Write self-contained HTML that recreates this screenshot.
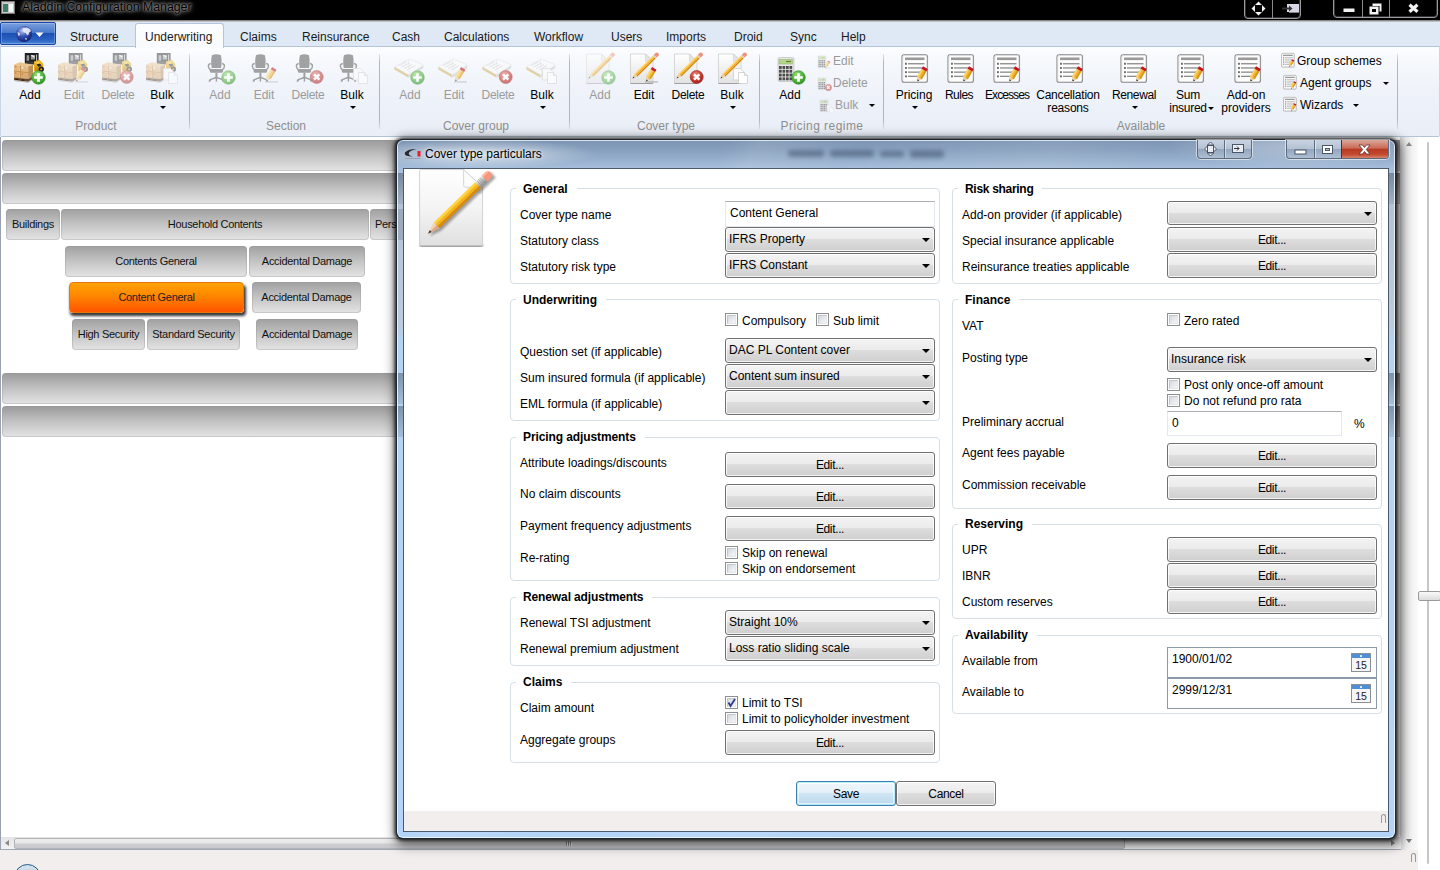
<!DOCTYPE html><html><head><meta charset="utf-8"><title>Aladdin Configuration Manager</title><style>
*{box-sizing:border-box;margin:0;padding:0}
html,body{width:1440px;height:870px;overflow:hidden;background:#fff;font-family:"Liberation Sans",sans-serif;font-size:12px;color:#000}
.abs{position:absolute}
#titlebar{position:absolute;left:0;top:0;width:1440px;height:22px;background:#000}
#titlebar .line{position:absolute;left:0;top:20px;width:1440px;height:2px;background:linear-gradient(#707070,#d8d8d8)}
#title{position:absolute;left:22px;top:0;font-size:12.3px;line-height:15px;color:#000;text-shadow:0 0 3px #8a8a8a,0 0 5px #777,0 0 8px #777,0 0 2px #999;white-space:nowrap}
#tabrow{position:absolute;left:0;top:22px;width:1440px;height:25px;background:#dfe9f5}
.tab{z-index:4;position:absolute;top:0;height:25px;line-height:30px;font-size:12px;white-space:nowrap;color:#1a1a1a}
#ribbon{position:absolute;left:0;top:46px;width:1440px;height:91px;border:1px solid #b4c4d8;border-left-color:#c9d6e7;border-right-color:#c9d6e7;border-radius:0 0 2px 2px;background:linear-gradient(#fcfdff 0,#f5f8fc 18%,#eef2f9 55%,#e9eef7 100%)}
.rl{position:absolute;font-size:12px;line-height:13px;text-align:center;white-space:nowrap;transform:translateX(-50%)}
.dis{color:#9b9b9b}
.gl{position:absolute;top:119px;font-size:12px;line-height:14px;color:#8e8e8e;transform:translateX(-50%);white-space:nowrap}
.sep{position:absolute;top:54px;width:1px;height:75px;background:linear-gradient(rgba(160,178,205,.3),#a6b8d2 12%,#a6b8d2 88%,rgba(160,178,205,.3))}
/*arr*/.arr{position:absolute;width:0;height:0;border-left:3.5px solid transparent;border-right:3.5px solid transparent;border-top:4px solid #000}
.sarr{position:absolute;width:0;height:0;border-left:3px solid transparent;border-right:3px solid transparent;border-top:3px solid #000}
.bar{position:absolute;border-radius:4px;background:linear-gradient(#9a9a9a 0,#c2c2c2 50%,#e4e4e4 100%);box-shadow:inset 0 0 0 1px rgba(150,150,150,.35)}
.nb{position:absolute;border-radius:4px;background:linear-gradient(#a0a0a0 0,#c4c4c4 50%,#e4e4e4 100%);box-shadow:inset 0 0 0 1px rgba(150,150,150,.35);font-size:11px;letter-spacing:-0.3px;text-align:center;white-space:nowrap;color:#111}
.grp{position:absolute;border:1px solid #d5dfe5;border-radius:4px}
.gh{position:absolute;font-weight:bold;font-size:12px;line-height:14px;background:#fff;padding:0 9px 0 7px;white-space:nowrap;letter-spacing:0}
.lb{position:absolute;font-size:12px;line-height:14px;white-space:nowrap}
.cb{position:absolute;width:210px;height:25px;border:1px solid #707070;border-radius:3px;background:linear-gradient(#f3f3f3 0,#ebebeb 49%,#dddddd 50%,#cfcfcf 100%);box-shadow:inset 0 0 0 1px rgba(255,255,255,.75);font-size:12px;line-height:23px;padding-left:3px;white-space:nowrap}
.cb i{position:absolute;right:4px;top:9.5px;width:0;height:0;border-left:4px solid transparent;border-right:4px solid transparent;border-top:4.5px solid #000}
.bt{letter-spacing:-0.35px;position:absolute;width:210px;height:25px;border:1px solid #707070;border-radius:3px;background:linear-gradient(#f3f3f3 0,#ebebeb 49%,#dddddd 50%,#cfcfcf 100%);box-shadow:inset 0 0 0 1px rgba(255,255,255,.75);font-size:12px;line-height:24px;text-align:center;white-space:nowrap}
.tb{position:absolute;border:1px solid #e3e9ef;border-top-color:#abadb3;background:#fff;font-size:12px;line-height:23px;padding-left:4px;white-space:nowrap}
.ck{position:absolute;width:13px;height:13px;border:1px solid #8e8f8f;background:#fff}
.ck:before{content:"";box-sizing:border-box;position:absolute;left:1px;top:1px;width:9px;height:9px;border:1px solid #c2c6cd;border-right-color:#e4e6ea;border-bottom-color:#e4e6ea;background:linear-gradient(135deg,#d4d8df,#f6f7f9)}
</style></head><body>
<div id="titlebar"><div class="line"></div>
<div class="abs" style="left:1px;top:1px;width:14px;height:13px;background:#c9c9c9;border:1px solid #777"><div class="abs" style="left:1px;top:2px;width:5px;height:8px;background:#3f7f6a"></div><div class="abs" style="left:7px;top:2px;width:4px;height:8px;background:#f4f4f4"></div></div>
<div id="title">Aladdin Configuration Manager</div>
<div class="abs" style="left:1244px;top:-3px;width:57px;height:22px;border:1px solid #9a9a9a;border-radius:0 0 4px 4px;box-shadow:inset 0 0 0 1px #333"></div><div class="abs" style="left:1272px;top:0;width:1px;height:18px;background:#8a8a8a"></div>
<div class="abs" style="left:1333px;top:-3px;width:105px;height:21px;border:1px solid #9a9a9a;border-radius:0 0 4px 4px;box-shadow:inset 0 0 0 1px #333"></div><div class="abs" style="left:1362px;top:0;width:1px;height:17px;background:#8a8a8a"></div><div class="abs" style="left:1389px;top:0;width:1px;height:17px;background:#8a8a8a"></div>
<svg class="abs" style="left:1244px;top:0" width="196" height="20" viewBox="0 0 196 20"><g fill="#f2f2f2"><path d="M14.5 1.5l3.5 3.5h-7zM14.5 15.5l3.500-3.500h-7zM7.500 8.500l3.500-3.500v7zM21.500 8.500l-3.500-3.500v7z"/><rect x="43" y="4" width="12" height="8" fill="#d8d8e4"/><rect x="45" y="12" width="10" height="1" fill="#888"/><path d="M38 7.500h7v-2l3.500 3-3.500 3v-2h-7z" fill="#333"/><rect x="99.500" y="8.500" width="11" height="3.500"/><path d="M125.500 6.500h9v8h-9zM128 9v3h4v-3z" fill-rule="evenodd"/><path d="M128.500 3.500h9v8h-2v-5.500h-7z"/></g><path d="M165.500 4.800l8 7M173.500 4.800l-8 7" stroke="#f2f2f2" stroke-width="3.200"/></svg>
</div>
<div id="tabrow">
<div class="abs" style="left:0;top:0;width:56px;height:23px;border:1px solid #1546a8;border-radius:2px;background:linear-gradient(#7a9fdc 0,#4a7acb 45%,#1d50b4 50%,#2a62c2 80%,#4a86d8 100%);box-shadow:inset 0 0 0 1px rgba(255,255,255,.25)"></div>
<svg class="abs" style="left:15px;top:2px" width="36" height="20" viewBox="0 0 36 20"><defs><radialGradient id="gl" cx="40%" cy="30%" r="75%"><stop offset="0" stop-color="#b9c8ee"/><stop offset=".45" stop-color="#3b56b6"/><stop offset="1" stop-color="#0b1a6a"/></radialGradient></defs><circle cx="9" cy="10" r="8" fill="url(#gl)"/><path d="M8 4l4-.5 3 1.500 1 2.500-1.500.5-1 2.500-1.500 1-1-2.500-2-.5-1.500-2zM2.500 8l2 1 .5 2-1.500 1zM10 14l2 .5-1 2z" fill="#e9eefb" opacity=".92"/><path d="M20.500 8.500h8l-4 4.500z" fill="#fff"/></svg>
<div class="abs" style="left:135px;top:1px;width:89px;height:25px;border:1px solid #b5c6dc;border-bottom:none;border-radius:3px 3px 0 0;background:linear-gradient(#fcfdfe,#f8fafd);z-index:3"></div>
<div class="tab" style="left:70px">Structure</div>
<div class="tab" style="left:145px">Underwriting</div>
<div class="tab" style="left:240px">Claims</div>
<div class="tab" style="left:302px">Reinsurance</div>
<div class="tab" style="left:392px">Cash</div>
<div class="tab" style="left:444px">Calculations</div>
<div class="tab" style="left:534px">Workflow</div>
<div class="tab" style="left:611px">Users</div>
<div class="tab" style="left:666px">Imports</div>
<div class="tab" style="left:734px">Droid</div>
<div class="tab" style="left:790px">Sync</div>
<div class="tab" style="left:841px">Help</div>
</div>
<div id="ribbon"></div>
<div id="ribc" class="abs" style="left:0;top:0;width:1440px;height:137px">
<div class="rl" style="left:30px;top:89px;letter-spacing:0px">Add</div>
<div class="rl dis" style="left:74px;top:89px;letter-spacing:0px">Edit</div>
<div class="rl dis" style="left:118px;top:89px;letter-spacing:-0.3px">Delete</div>
<div class="rl" style="left:162px;top:89px;letter-spacing:0px">Bulk</div>
<div class="sarr" style="left:159.5px;top:106px"></div>
<div class="rl dis" style="left:220px;top:89px;letter-spacing:0px">Add</div>
<div class="rl dis" style="left:264px;top:89px;letter-spacing:0px">Edit</div>
<div class="rl dis" style="left:308px;top:89px;letter-spacing:-0.3px">Delete</div>
<div class="rl" style="left:352px;top:89px;letter-spacing:0px">Bulk</div>
<div class="sarr" style="left:349.5px;top:106px"></div>
<div class="rl dis" style="left:410px;top:89px;letter-spacing:0px">Add</div>
<div class="rl dis" style="left:454px;top:89px;letter-spacing:0px">Edit</div>
<div class="rl dis" style="left:498px;top:89px;letter-spacing:-0.3px">Delete</div>
<div class="rl" style="left:542px;top:89px;letter-spacing:0px">Bulk</div>
<div class="sarr" style="left:539.5px;top:106px"></div>
<div class="rl dis" style="left:600px;top:89px;letter-spacing:0px">Add</div>
<div class="rl" style="left:644px;top:89px;letter-spacing:0px">Edit</div>
<div class="rl" style="left:688px;top:89px;letter-spacing:-0.3px">Delete</div>
<div class="rl" style="left:732px;top:89px;letter-spacing:0px">Bulk</div>
<div class="sarr" style="left:729.5px;top:106px"></div>
<div class="rl" style="left:790px;top:89px;letter-spacing:0px">Add</div>
<div class="rl" style="left:914px;top:89px;letter-spacing:0px">Pricing</div>
<div class="sarr" style="left:911.5px;top:106px"></div>
<div class="rl" style="left:959px;top:89px;letter-spacing:-0.5px">Rules</div>
<div class="rl" style="left:1007px;top:89px;letter-spacing:-0.9px">Excesses</div>
<div class="rl" style="left:1068px;top:89px;letter-spacing:-0.2px">Cancellation<br>reasons</div>
<div class="rl" style="left:1134px;top:89px;letter-spacing:-0.4px">Renewal</div>
<div class="sarr" style="left:1131.5px;top:106px"></div>
<div class="rl" style="left:1188px;top:89px;letter-spacing:-0.3px">Sum<br>insured</div>
<div class="sarr" style="left:1208px;top:107px"></div>
<div class="rl" style="left:1246px;top:89px;letter-spacing:0px">Add-on<br>providers</div>
<div class="gl" style="left:96px;letter-spacing:0px">Product</div>
<div class="gl" style="left:286px;letter-spacing:0px">Section</div>
<div class="gl" style="left:476px;letter-spacing:0px">Cover group</div>
<div class="gl" style="left:666px;letter-spacing:0px">Cover type</div>
<div class="gl" style="left:822px;letter-spacing:0.45px">Pricing regime</div>
<div class="gl" style="left:1141px;letter-spacing:0px">Available</div>
<div class="sep" style="left:189px"></div>
<div class="sep" style="left:379px"></div>
<div class="sep" style="left:569px"></div>
<div class="sep" style="left:759px"></div>
<div class="sep" style="left:883px"></div>
<div class="sep" style="left:1397px"></div>
<div class="lb dis" style="left:833px;top:55px;line-height:13px">Edit</div>
<div class="lb dis" style="left:833px;top:77px;line-height:13px">Delete</div>
<div class="lb dis" style="left:835px;top:99px;line-height:13px">Bulk</div>
<div class="lb" style="left:1297px;top:55px;line-height:13px">Group schemes</div>
<div class="lb" style="left:1300px;top:77px;line-height:13px">Agent groups</div>
<div class="lb" style="left:1300px;top:99px;line-height:13px">Wizards</div>
<div class="sarr" style="left:869px;top:104px"></div><div class="sarr" style="left:1383px;top:82px"></div><div class="sarr" style="left:1353px;top:104px"></div>
<svg width="0" height="0" style="position:absolute"><defs><radialGradient id="gp" cx="40%" cy="30%" r="80%"><stop offset="0" stop-color="#9be07a"/><stop offset=".55" stop-color="#4fb03a"/><stop offset="1" stop-color="#2e8a24"/></radialGradient><radialGradient id="rp" cx="40%" cy="30%" r="80%"><stop offset="0" stop-color="#e88a80"/><stop offset=".55" stop-color="#c8372f"/><stop offset="1" stop-color="#9a1f1a"/></radialGradient><linearGradient id="pgr" x1="0" y1="0" x2="0" y2="1"><stop offset="0" stop-color="#ffffff"/><stop offset="1" stop-color="#e2e2e2"/></linearGradient><linearGradient id="box1" x1="0" y1="0" x2="0" y2="1"><stop offset="0" stop-color="#e8c08a"/><stop offset="1" stop-color="#d6a66a"/></linearGradient></defs></svg>
<svg class="abs" style="left:14px;top:52px" width="32" height="33" viewBox="0 0 32 33"><g><path d="M10.800 1h13.800v11h-13.800z" fill="#1e1e1e"/><path d="M12.600 3.200h2.600v5.500h-2.600zM16.800 3h4.200v4.500h-4.200z" fill="#9a9a9a"/><path d="M17.500 3.200l2.800 1.800" stroke="#f4f4f4" stroke-width="1.100"/><path d="M22.600 2.500v9" stroke="#d9d9d9" stroke-width=".9"/><path d="M12 9.500h9v3h-9z" fill="#3a3a3a"/><path d="M20 9.500l5.500-1.700 3.700 4v7.500h-9.200z" fill="#e6ad18"/><path d="M21 10.500l4-1.200 2.500 2.800-2 1.200z" fill="#f7cf4a"/><path d="M22.500 12.500l3.500-1 1.500 2-3 1.500z" fill="#2a2a2a"/><circle cx="27.200" cy="17.300" r="2.700" fill="#1d1d1d"/><circle cx="27.200" cy="17.300" r="1.100" fill="#d9a21a"/><path d="M21 14.500l3 .5v4h-3z" fill="#c88f12"/><path d="M0 12.500l6-2.200 13 2.400-4.800 1.800z" fill="#eac48c"/><path d="M0 12.500l14.200 2v12.500l-14.200-1.500z" fill="url(#box1)"/><path d="M14.200 14.500l4.800-1.800v11.800l-4.800 2.500z" fill="#bf9058"/><path d="M0 19l14.200 1.800 4.800-2.200M6.500 13.400v12.800" stroke="#b98548" stroke-width=".7" fill="none"/><path d="M.8 14l1.600.25v1.300l-1.600-.25zM.8 20.300l1.600.25v1.300l-1.600-.25zM7.500 21.200l1.600.25v1.300l-1.600-.25z" fill="#e8702a"/><path d="M7.500 15l1.800.25v1.500l-1.800-.25zM5 17.500l1 .15v.8l-1-.15zM5 23.500l1 .15v.8l-1-.15z" fill="#f6efe6"/><path d="M0 25.500l14.200 1.500 4.800-2.500v2.300l-4.800 2.900-14.200-1.700z" fill="#6a4a2c"/><path d="M1.500 26.600l3 .35v1.200l-3-.35zM7.500 27.300l3 .35v1.200l-3-.35z" fill="#2e1f12"/><path d="M0 28.200l14.200 1.700 4.800-2.900v.8l-4.800 2.900-14.200-1.700z" fill="#8a8a8a" opacity=".7"/></g><circle cx="24.500" cy="25.500" r="6.800" fill="url(#gp)" stroke="#2f8a25" stroke-width=".6"/><path d="M24.500 21.200v8.600M20.200 25.500h8.600" stroke="#fff" stroke-width="2.700"/></svg>
<svg class="abs" style="left:58px;top:52px;opacity:0.45" width="32" height="33" viewBox="0 0 32 33"><g><path d="M10.800 1h13.800v11h-13.800z" fill="#1e1e1e"/><path d="M12.600 3.200h2.600v5.500h-2.600zM16.800 3h4.200v4.500h-4.200z" fill="#9a9a9a"/><path d="M17.500 3.200l2.800 1.800" stroke="#f4f4f4" stroke-width="1.100"/><path d="M22.600 2.500v9" stroke="#d9d9d9" stroke-width=".9"/><path d="M12 9.500h9v3h-9z" fill="#3a3a3a"/><path d="M20 9.500l5.500-1.700 3.700 4v7.500h-9.200z" fill="#e6ad18"/><path d="M21 10.500l4-1.200 2.500 2.800-2 1.200z" fill="#f7cf4a"/><path d="M22.500 12.500l3.500-1 1.500 2-3 1.500z" fill="#2a2a2a"/><circle cx="27.200" cy="17.300" r="2.700" fill="#1d1d1d"/><circle cx="27.200" cy="17.300" r="1.100" fill="#d9a21a"/><path d="M21 14.500l3 .5v4h-3z" fill="#c88f12"/><path d="M0 12.500l6-2.200 13 2.400-4.800 1.800z" fill="#eac48c"/><path d="M0 12.500l14.200 2v12.500l-14.200-1.500z" fill="url(#box1)"/><path d="M14.200 14.500l4.800-1.800v11.800l-4.800 2.500z" fill="#bf9058"/><path d="M0 19l14.200 1.800 4.800-2.200M6.500 13.400v12.800" stroke="#b98548" stroke-width=".7" fill="none"/><path d="M.8 14l1.600.25v1.300l-1.600-.25zM.8 20.300l1.600.25v1.300l-1.600-.25zM7.500 21.200l1.600.25v1.300l-1.600-.25z" fill="#e8702a"/><path d="M7.500 15l1.800.25v1.500l-1.800-.25zM5 17.500l1 .15v.8l-1-.15zM5 23.500l1 .15v.8l-1-.15z" fill="#f6efe6"/><path d="M0 25.500l14.200 1.500 4.800-2.500v2.300l-4.800 2.900-14.200-1.700z" fill="#6a4a2c"/><path d="M1.500 26.600l3 .35v1.200l-3-.35zM7.500 27.300l3 .35v1.200l-3-.35z" fill="#2e1f12"/><path d="M0 28.200l14.200 1.700 4.800-2.900v.8l-4.800 2.900-14.200-1.700z" fill="#8a8a8a" opacity=".7"/></g><rect x="17" y="29.300" width="13" height="1.200" fill="#9a9a9a" opacity=".7"/><g transform="translate(18.300,29.300) rotate(-58)"><path d="M0 0l4-2.600v5.200z" fill="#e9cfa3"/><path d="M0 0l1.600-1v2z" fill="#222"/><rect x="4" y="-2.600" width="8.500" height="5.200" fill="#f3bd3c"/><rect x="4" y="-2.600" width="8.500" height="1.700" fill="#fbd877"/><rect x="4" y=".9" width="8.500" height="1.700" fill="#dc9d1e"/><rect x="12.500" y="-2.600" width="2.600" height="5.200" fill="#c6202a"/></g></svg>
<svg class="abs" style="left:102px;top:52px;opacity:0.45" width="32" height="33" viewBox="0 0 32 33"><g><path d="M10.800 1h13.800v11h-13.800z" fill="#1e1e1e"/><path d="M12.600 3.200h2.600v5.500h-2.600zM16.800 3h4.200v4.500h-4.200z" fill="#9a9a9a"/><path d="M17.500 3.200l2.800 1.800" stroke="#f4f4f4" stroke-width="1.100"/><path d="M22.600 2.500v9" stroke="#d9d9d9" stroke-width=".9"/><path d="M12 9.500h9v3h-9z" fill="#3a3a3a"/><path d="M20 9.500l5.500-1.700 3.700 4v7.500h-9.200z" fill="#e6ad18"/><path d="M21 10.500l4-1.200 2.500 2.800-2 1.200z" fill="#f7cf4a"/><path d="M22.500 12.500l3.500-1 1.500 2-3 1.500z" fill="#2a2a2a"/><circle cx="27.200" cy="17.300" r="2.700" fill="#1d1d1d"/><circle cx="27.200" cy="17.300" r="1.100" fill="#d9a21a"/><path d="M21 14.500l3 .5v4h-3z" fill="#c88f12"/><path d="M0 12.500l6-2.200 13 2.400-4.800 1.800z" fill="#eac48c"/><path d="M0 12.500l14.200 2v12.500l-14.200-1.500z" fill="url(#box1)"/><path d="M14.200 14.500l4.800-1.800v11.800l-4.800 2.500z" fill="#bf9058"/><path d="M0 19l14.200 1.800 4.800-2.200M6.500 13.400v12.800" stroke="#b98548" stroke-width=".7" fill="none"/><path d="M.8 14l1.600.25v1.300l-1.600-.25zM.8 20.300l1.600.25v1.300l-1.600-.25zM7.500 21.200l1.600.25v1.300l-1.600-.25z" fill="#e8702a"/><path d="M7.500 15l1.800.25v1.500l-1.800-.25zM5 17.500l1 .15v.8l-1-.15zM5 23.500l1 .15v.8l-1-.15z" fill="#f6efe6"/><path d="M0 25.500l14.200 1.500 4.800-2.500v2.300l-4.800 2.900-14.200-1.700z" fill="#6a4a2c"/><path d="M1.500 26.600l3 .35v1.200l-3-.35zM7.500 27.300l3 .35v1.200l-3-.35z" fill="#2e1f12"/><path d="M0 28.200l14.200 1.700 4.800-2.900v.8l-4.800 2.900-14.200-1.700z" fill="#8a8a8a" opacity=".7"/></g><circle cx="24.700" cy="25" r="6.500" fill="url(#rp)" stroke="#9a1f1a" stroke-width=".6"/><path d="M22 22.300l5.400 5.400M27.400 22.300l-5.400 5.400" stroke="#fff" stroke-width="2.500"/></svg>
<svg class="abs" style="left:146px;top:52px;opacity:0.45" width="32" height="33" viewBox="0 0 32 33"><g><path d="M10.800 1h13.800v11h-13.800z" fill="#1e1e1e"/><path d="M12.600 3.200h2.600v5.500h-2.600zM16.800 3h4.200v4.500h-4.200z" fill="#9a9a9a"/><path d="M17.500 3.200l2.800 1.800" stroke="#f4f4f4" stroke-width="1.100"/><path d="M22.600 2.500v9" stroke="#d9d9d9" stroke-width=".9"/><path d="M12 9.500h9v3h-9z" fill="#3a3a3a"/><path d="M20 9.500l5.500-1.700 3.700 4v7.500h-9.200z" fill="#e6ad18"/><path d="M21 10.500l4-1.200 2.500 2.800-2 1.200z" fill="#f7cf4a"/><path d="M22.500 12.500l3.500-1 1.500 2-3 1.500z" fill="#2a2a2a"/><circle cx="27.200" cy="17.300" r="2.700" fill="#1d1d1d"/><circle cx="27.200" cy="17.300" r="1.100" fill="#d9a21a"/><path d="M21 14.500l3 .5v4h-3z" fill="#c88f12"/><path d="M0 12.500l6-2.200 13 2.400-4.800 1.800z" fill="#eac48c"/><path d="M0 12.500l14.200 2v12.500l-14.200-1.500z" fill="url(#box1)"/><path d="M14.200 14.500l4.800-1.800v11.800l-4.800 2.500z" fill="#bf9058"/><path d="M0 19l14.200 1.800 4.800-2.200M6.500 13.400v12.800" stroke="#b98548" stroke-width=".7" fill="none"/><path d="M.8 14l1.600.25v1.300l-1.600-.25zM.8 20.300l1.600.25v1.300l-1.600-.25zM7.500 21.200l1.600.25v1.300l-1.600-.25z" fill="#e8702a"/><path d="M7.500 15l1.800.25v1.500l-1.800-.25zM5 17.500l1 .15v.8l-1-.15zM5 23.500l1 .15v.8l-1-.15z" fill="#f6efe6"/><path d="M0 25.500l14.200 1.500 4.800-2.500v2.300l-4.800 2.900-14.200-1.700z" fill="#6a4a2c"/><path d="M1.500 26.600l3 .35v1.200l-3-.35zM7.500 27.300l3 .35v1.200l-3-.35z" fill="#2e1f12"/><path d="M0 28.200l14.200 1.700 4.800-2.900v.8l-4.800 2.900-14.200-1.700z" fill="#8a8a8a" opacity=".7"/></g><path d="M17.500 16.500h7l3 3v8.500h-10z" fill="#fbfbfb" stroke="#c9c9c9" stroke-width=".7"/><path d="M22.500 20.500h6l3 3v8h-9z" fill="#ffffff" stroke="#c4c4c4" stroke-width=".7"/><path d="M28.500 20.500v3h3" fill="#e9e9e9" stroke="#c4c4c4" stroke-width=".6"/></svg>
<svg class="abs" style="left:204px;top:52px;opacity:0.55" width="32" height="33" viewBox="0 0 32 33"><g transform="translate(1.4,1)"><g fill="#5b5b5b" stroke="none"><path d="M6.500 2.200q4.500-1.700 9 0 1.300 6 .2 12.800h-9.400q-1.100-6.800.2-12.800z"/><path d="M4.500 16h13q.9 2.400-.6 3.700h-11.800q-1.500-1.300-.6-3.700z"/><rect x="10" y="19.500" width="2" height="5"/><path d="M11 23.500l-7 2.700-.9 2.500h1.700l1-1.700 5.200-1.700 5.200 1.700 1 1.700h1.700l-.9-2.500z"/><rect x="10.300" y="24" width="1.400" height="4.600"/></g><path d="M5.300 10.500q-2.600.3-2.300 3 .3 2.400 2 3M16.700 10.500q2.600.3 2.300 3-.3 2.400-2 3" fill="none" stroke="#5b5b5b" stroke-width="1.400"/></g><circle cx="24.500" cy="25.500" r="6.800" fill="url(#gp)" stroke="#2f8a25" stroke-width=".6"/><path d="M24.500 21.200v8.600M20.200 25.500h8.600" stroke="#fff" stroke-width="2.700"/></svg>
<svg class="abs" style="left:248px;top:52px;opacity:0.55" width="32" height="33" viewBox="0 0 32 33"><g transform="translate(1.4,1)"><g fill="#5b5b5b" stroke="none"><path d="M6.500 2.200q4.500-1.700 9 0 1.300 6 .2 12.800h-9.400q-1.100-6.800.2-12.800z"/><path d="M4.500 16h13q.9 2.400-.6 3.700h-11.800q-1.500-1.300-.6-3.700z"/><rect x="10" y="19.500" width="2" height="5"/><path d="M11 23.500l-7 2.700-.9 2.500h1.700l1-1.700 5.200-1.700 5.200 1.700 1 1.700h1.700l-.9-2.500z"/><rect x="10.300" y="24" width="1.400" height="4.600"/></g><path d="M5.300 10.500q-2.600.3-2.300 3 .3 2.400 2 3M16.700 10.500q2.600.3 2.300 3-.3 2.400-2 3" fill="none" stroke="#5b5b5b" stroke-width="1.400"/></g><rect x="17" y="29.300" width="13" height="1.200" fill="#9a9a9a" opacity=".7"/><g transform="translate(18.300,29.300) rotate(-58)"><path d="M0 0l4-2.600v5.200z" fill="#e9cfa3"/><path d="M0 0l1.600-1v2z" fill="#222"/><rect x="4" y="-2.600" width="8.500" height="5.200" fill="#f3bd3c"/><rect x="4" y="-2.600" width="8.500" height="1.700" fill="#fbd877"/><rect x="4" y=".9" width="8.500" height="1.700" fill="#dc9d1e"/><rect x="12.500" y="-2.600" width="2.600" height="5.200" fill="#c6202a"/></g></svg>
<svg class="abs" style="left:292px;top:52px;opacity:0.55" width="32" height="33" viewBox="0 0 32 33"><g transform="translate(1.4,1)"><g fill="#5b5b5b" stroke="none"><path d="M6.500 2.200q4.500-1.700 9 0 1.300 6 .2 12.800h-9.400q-1.100-6.800.2-12.800z"/><path d="M4.500 16h13q.9 2.400-.6 3.700h-11.800q-1.500-1.300-.6-3.700z"/><rect x="10" y="19.500" width="2" height="5"/><path d="M11 23.500l-7 2.700-.9 2.500h1.700l1-1.700 5.200-1.700 5.200 1.700 1 1.700h1.700l-.9-2.500z"/><rect x="10.300" y="24" width="1.400" height="4.600"/></g><path d="M5.300 10.500q-2.600.3-2.300 3 .3 2.400 2 3M16.700 10.500q2.600.3 2.300 3-.3 2.400-2 3" fill="none" stroke="#5b5b5b" stroke-width="1.400"/></g><circle cx="24.700" cy="25" r="6.500" fill="url(#rp)" stroke="#9a1f1a" stroke-width=".6"/><path d="M22 22.300l5.400 5.400M27.400 22.300l-5.400 5.400" stroke="#fff" stroke-width="2.500"/></svg>
<svg class="abs" style="left:336px;top:52px;opacity:0.55" width="32" height="33" viewBox="0 0 32 33"><g transform="translate(1.4,1)"><g fill="#5b5b5b" stroke="none"><path d="M6.500 2.200q4.500-1.700 9 0 1.300 6 .2 12.800h-9.400q-1.100-6.800.2-12.800z"/><path d="M4.500 16h13q.9 2.400-.6 3.700h-11.800q-1.500-1.300-.6-3.700z"/><rect x="10" y="19.500" width="2" height="5"/><path d="M11 23.500l-7 2.700-.9 2.500h1.700l1-1.700 5.200-1.700 5.200 1.700 1 1.700h1.700l-.9-2.500z"/><rect x="10.300" y="24" width="1.400" height="4.600"/></g><path d="M5.300 10.500q-2.600.3-2.300 3 .3 2.400 2 3M16.700 10.500q2.600.3 2.300 3-.3 2.400-2 3" fill="none" stroke="#5b5b5b" stroke-width="1.400"/></g><path d="M17.500 16.500h7l3 3v8.500h-10z" fill="#fbfbfb" stroke="#c9c9c9" stroke-width=".7"/><path d="M22.500 20.500h6l3 3v8h-9z" fill="#ffffff" stroke="#c4c4c4" stroke-width=".7"/><path d="M28.500 20.500v3h3" fill="#e9e9e9" stroke="#c4c4c4" stroke-width=".6"/></svg>
<svg class="abs" style="left:393px;top:52px;opacity:0.6" width="32" height="33" viewBox="0 0 32 33"><path d="M1.500 14.500l15-7.500 13.500 5.500v3.500l-14.500 9.500-14-8z" fill="#fafafa" stroke="#d0d0d0" stroke-width=".5"/><path d="M1.500 14.500l14 8 14.500-9.500" fill="none" stroke="#e3e3e3" stroke-width=".6"/><path d="M1.500 15l14 8v2.500l-14-8z" fill="#d7b56a"/><path d="M15.500 23l14.500-9.500v2.500l-14.500 9.500z" fill="#cfcfcf"/><path d="M6 13.500l8-4M8.500 15l8-4M11 16.500l8-4M14 18l8-4.500" stroke="#c4c4c4" stroke-width=".7"/><path d="M15.500 8l1 14" stroke="#d9d9d9" stroke-width=".6"/><circle cx="24.500" cy="25.500" r="6.800" fill="url(#gp)" stroke="#2f8a25" stroke-width=".6"/><path d="M24.500 21.200v8.600M20.200 25.500h8.600" stroke="#fff" stroke-width="2.700"/></svg>
<svg class="abs" style="left:437px;top:52px;opacity:0.6" width="32" height="33" viewBox="0 0 32 33"><path d="M1.500 14.500l15-7.500 13.500 5.500v3.500l-14.500 9.500-14-8z" fill="#fafafa" stroke="#d0d0d0" stroke-width=".5"/><path d="M1.500 14.500l14 8 14.500-9.500" fill="none" stroke="#e3e3e3" stroke-width=".6"/><path d="M1.500 15l14 8v2.500l-14-8z" fill="#d7b56a"/><path d="M15.500 23l14.500-9.500v2.500l-14.500 9.500z" fill="#cfcfcf"/><path d="M6 13.500l8-4M8.500 15l8-4M11 16.500l8-4M14 18l8-4.500" stroke="#c4c4c4" stroke-width=".7"/><path d="M15.500 8l1 14" stroke="#d9d9d9" stroke-width=".6"/><rect x="17" y="29.300" width="13" height="1.200" fill="#9a9a9a" opacity=".7"/><g transform="translate(18.300,29.300) rotate(-58)"><path d="M0 0l4-2.600v5.200z" fill="#e9cfa3"/><path d="M0 0l1.600-1v2z" fill="#222"/><rect x="4" y="-2.600" width="8.500" height="5.200" fill="#f3bd3c"/><rect x="4" y="-2.600" width="8.500" height="1.700" fill="#fbd877"/><rect x="4" y=".9" width="8.500" height="1.700" fill="#dc9d1e"/><rect x="12.500" y="-2.600" width="2.600" height="5.200" fill="#c6202a"/></g></svg>
<svg class="abs" style="left:481px;top:52px;opacity:0.6" width="32" height="33" viewBox="0 0 32 33"><path d="M1.500 14.500l15-7.500 13.500 5.500v3.500l-14.500 9.500-14-8z" fill="#fafafa" stroke="#d0d0d0" stroke-width=".5"/><path d="M1.500 14.500l14 8 14.500-9.500" fill="none" stroke="#e3e3e3" stroke-width=".6"/><path d="M1.500 15l14 8v2.500l-14-8z" fill="#d7b56a"/><path d="M15.500 23l14.500-9.500v2.500l-14.500 9.500z" fill="#cfcfcf"/><path d="M6 13.500l8-4M8.500 15l8-4M11 16.500l8-4M14 18l8-4.500" stroke="#c4c4c4" stroke-width=".7"/><path d="M15.500 8l1 14" stroke="#d9d9d9" stroke-width=".6"/><circle cx="24.700" cy="25" r="6.500" fill="url(#rp)" stroke="#9a1f1a" stroke-width=".6"/><path d="M22 22.300l5.400 5.400M27.400 22.300l-5.400 5.400" stroke="#fff" stroke-width="2.500"/></svg>
<svg class="abs" style="left:525px;top:52px;opacity:0.6" width="32" height="33" viewBox="0 0 32 33"><path d="M1.500 14.500l15-7.500 13.500 5.500v3.500l-14.500 9.500-14-8z" fill="#fafafa" stroke="#d0d0d0" stroke-width=".5"/><path d="M1.500 14.500l14 8 14.500-9.500" fill="none" stroke="#e3e3e3" stroke-width=".6"/><path d="M1.500 15l14 8v2.500l-14-8z" fill="#d7b56a"/><path d="M15.500 23l14.500-9.500v2.500l-14.500 9.500z" fill="#cfcfcf"/><path d="M6 13.500l8-4M8.500 15l8-4M11 16.500l8-4M14 18l8-4.500" stroke="#c4c4c4" stroke-width=".7"/><path d="M15.500 8l1 14" stroke="#d9d9d9" stroke-width=".6"/><path d="M17.500 16.500h7l3 3v8.500h-10z" fill="#fbfbfb" stroke="#c9c9c9" stroke-width=".7"/><path d="M22.500 20.500h6l3 3v8h-9z" fill="#ffffff" stroke="#c4c4c4" stroke-width=".7"/><path d="M28.500 20.500v3h3" fill="#e9e9e9" stroke="#c4c4c4" stroke-width=".6"/></svg>
<svg class="abs" style="left:583.5px;top:52px;opacity:0.45" width="32" height="33" viewBox="0 0 32 33"><path d="M2.500 2h15l7.500 7.500v22h-22.500z" fill="url(#pgr)" stroke="#c9c9c9" stroke-width=".7"/><path d="M17.500 2v7.500h7.500z" fill="#e3e3e3" stroke="#c9c9c9" stroke-width=".5"/><path d="M2.500 31.500h22.500" stroke="#9f9f9f" stroke-width="1"/><g transform="translate(4.500,26.500) rotate(-44.500)"><path d="M0 0l5-2v4z" fill="#e9cfa3"/><path d="M0 0l2-.8v1.600z" fill="#444"/><rect x="5" y="-2" width="25.500" height="1.400" fill="#ffd45e"/><rect x="5" y="-.6" width="25.500" height="1.300" fill="#f6ab1c"/><rect x="5" y=".7" width="25.500" height="1.300" fill="#d88a10"/><rect x="30.500" y="-2" width="1.500" height="4" fill="#cfcfcf"/><path d="M32-2h2.200a2 2 0 0 1 0 4h-2.200z" fill="#f0917a"/></g><circle cx="24.500" cy="25.500" r="6.800" fill="url(#gp)" stroke="#2f8a25" stroke-width=".6"/><path d="M24.500 21.200v8.600M20.200 25.500h8.600" stroke="#fff" stroke-width="2.700"/></svg>
<svg class="abs" style="left:627.5px;top:52px" width="32" height="33" viewBox="0 0 32 33"><path d="M2.500 2h15l7.500 7.500v22h-22.500z" fill="url(#pgr)" stroke="#c9c9c9" stroke-width=".7"/><path d="M17.500 2v7.500h7.500z" fill="#e3e3e3" stroke="#c9c9c9" stroke-width=".5"/><path d="M2.500 31.500h22.500" stroke="#9f9f9f" stroke-width="1"/><g transform="translate(4.500,26.500) rotate(-44.500)"><path d="M0 0l5-2v4z" fill="#e9cfa3"/><path d="M0 0l2-.8v1.600z" fill="#444"/><rect x="5" y="-2" width="25.500" height="1.400" fill="#ffd45e"/><rect x="5" y="-.6" width="25.500" height="1.300" fill="#f6ab1c"/><rect x="5" y=".7" width="25.500" height="1.300" fill="#d88a10"/><rect x="30.500" y="-2" width="1.500" height="4" fill="#cfcfcf"/><path d="M32-2h2.200a2 2 0 0 1 0 4h-2.200z" fill="#f0917a"/></g><rect x="17" y="29.300" width="13" height="1.200" fill="#9a9a9a" opacity=".7"/><g transform="translate(18.300,29.300) rotate(-58)"><path d="M0 0l4-2.600v5.200z" fill="#e9cfa3"/><path d="M0 0l1.600-1v2z" fill="#222"/><rect x="4" y="-2.600" width="8.500" height="5.200" fill="#f3bd3c"/><rect x="4" y="-2.600" width="8.500" height="1.700" fill="#fbd877"/><rect x="4" y=".9" width="8.500" height="1.700" fill="#dc9d1e"/><rect x="12.500" y="-2.600" width="2.600" height="5.200" fill="#c6202a"/></g></svg>
<svg class="abs" style="left:671.5px;top:52px" width="32" height="33" viewBox="0 0 32 33"><path d="M2.500 2h15l7.500 7.500v22h-22.500z" fill="url(#pgr)" stroke="#c9c9c9" stroke-width=".7"/><path d="M17.500 2v7.500h7.500z" fill="#e3e3e3" stroke="#c9c9c9" stroke-width=".5"/><path d="M2.500 31.500h22.500" stroke="#9f9f9f" stroke-width="1"/><g transform="translate(4.500,26.500) rotate(-44.500)"><path d="M0 0l5-2v4z" fill="#e9cfa3"/><path d="M0 0l2-.8v1.600z" fill="#444"/><rect x="5" y="-2" width="25.500" height="1.400" fill="#ffd45e"/><rect x="5" y="-.6" width="25.500" height="1.300" fill="#f6ab1c"/><rect x="5" y=".7" width="25.500" height="1.300" fill="#d88a10"/><rect x="30.500" y="-2" width="1.500" height="4" fill="#cfcfcf"/><path d="M32-2h2.200a2 2 0 0 1 0 4h-2.200z" fill="#f0917a"/></g><circle cx="24.700" cy="25" r="6.500" fill="url(#rp)" stroke="#9a1f1a" stroke-width=".6"/><path d="M22 22.300l5.400 5.400M27.400 22.300l-5.400 5.400" stroke="#fff" stroke-width="2.500"/></svg>
<svg class="abs" style="left:715.5px;top:52px" width="32" height="33" viewBox="0 0 32 33"><path d="M2.500 2h15l7.500 7.500v22h-22.500z" fill="url(#pgr)" stroke="#c9c9c9" stroke-width=".7"/><path d="M17.500 2v7.500h7.500z" fill="#e3e3e3" stroke="#c9c9c9" stroke-width=".5"/><path d="M2.500 31.500h22.500" stroke="#9f9f9f" stroke-width="1"/><g transform="translate(4.500,26.500) rotate(-44.500)"><path d="M0 0l5-2v4z" fill="#e9cfa3"/><path d="M0 0l2-.8v1.600z" fill="#444"/><rect x="5" y="-2" width="25.500" height="1.400" fill="#ffd45e"/><rect x="5" y="-.6" width="25.500" height="1.300" fill="#f6ab1c"/><rect x="5" y=".7" width="25.500" height="1.300" fill="#d88a10"/><rect x="30.500" y="-2" width="1.500" height="4" fill="#cfcfcf"/><path d="M32-2h2.200a2 2 0 0 1 0 4h-2.200z" fill="#f0917a"/></g><path d="M17.500 16.500h7l3 3v8.500h-10z" fill="#fbfbfb" stroke="#c9c9c9" stroke-width=".7"/><path d="M22.500 20.500h6l3 3v8h-9z" fill="#ffffff" stroke="#c4c4c4" stroke-width=".7"/><path d="M28.500 20.500v3h3" fill="#e9e9e9" stroke="#c4c4c4" stroke-width=".6"/></svg>
<svg class="abs" style="left:773.7px;top:52px" width="32" height="33" viewBox="0 0 32 33"><rect x="4" y="5.500" width="16" height="24" rx="1.500" fill="#e6e6e6" stroke="#bdbdbd" stroke-width=".7"/><rect x="5" y="7.500" width="13.500" height="4.500" fill="#b5d58a" stroke="#8fae6a" stroke-width=".5"/><path d="M12 9.500h5" stroke="#5f7f3f" stroke-width="1.200"/><rect x="5.0" y="14.0" width="2.700" height="2.900" fill="#4a4a4a"/><rect x="5.0" y="17.8" width="2.700" height="2.900" fill="#4a4a4a"/><rect x="5.0" y="21.6" width="2.700" height="2.900" fill="#4a4a4a"/><rect x="5.0" y="25.4" width="2.700" height="2.900" fill="#4a4a4a"/><rect x="8.5" y="14.0" width="2.700" height="2.900" fill="#4a4a4a"/><rect x="8.5" y="17.8" width="2.700" height="2.900" fill="#4a4a4a"/><rect x="8.5" y="21.6" width="2.700" height="2.900" fill="#4a4a4a"/><rect x="8.5" y="25.4" width="2.700" height="2.900" fill="#4a4a4a"/><rect x="12.0" y="14.0" width="2.700" height="2.900" fill="#4a4a4a"/><rect x="12.0" y="17.8" width="2.700" height="2.900" fill="#4a4a4a"/><rect x="12.0" y="21.6" width="2.700" height="2.900" fill="#4a4a4a"/><rect x="12.0" y="25.4" width="2.700" height="2.900" fill="#4a4a4a"/><rect x="15.5" y="14.0" width="2.700" height="2.900" fill="#4a4a4a"/><rect x="15.5" y="17.8" width="2.700" height="2.900" fill="#4a4a4a"/><rect x="15.5" y="21.6" width="2.700" height="2.900" fill="#4a4a4a"/><rect x="15.5" y="25.4" width="2.700" height="2.900" fill="#4a4a4a"/><circle cx="24.500" cy="25.500" r="6.800" fill="url(#gp)" stroke="#2f8a25" stroke-width=".6"/><path d="M24.500 21.200v8.600M20.200 25.500h8.600" stroke="#fff" stroke-width="2.700"/></svg>
<svg class="abs" style="left:899.3px;top:52px" width="32" height="33" viewBox="0 0 32 33"><rect x="3" y="2.700" width="25.500" height="27.500" rx="2" fill="#fdfdfd" stroke="#858585" stroke-width="1.100"/><rect x="3.800" y="3.500" width="24" height="26" rx="1.500" fill="none" stroke="#d9d9d9" stroke-width=".8"/><rect x="6" y="5.500" width="19.500" height="2.600" fill="#9a9a9a"/><rect x="6" y="10.8" width="1.900" height="1.900" fill="#6a6a6a"/><rect x="9" y="11.1" width="16.5" height="1.300" fill="#8a8a8a"/><rect x="6" y="15.0" width="1.900" height="1.900" fill="#6a6a6a"/><rect x="9" y="15.3" width="16.5" height="1.300" fill="#8a8a8a"/><rect x="6" y="19.200000000000003" width="1.900" height="1.900" fill="#6a6a6a"/><rect x="9" y="19.5" width="13" height="1.300" fill="#8a8a8a"/><rect x="6" y="23.400000000000002" width="1.900" height="1.900" fill="#6a6a6a"/><rect x="9" y="23.700000000000003" width="10" height="1.300" fill="#8a8a8a"/><g transform="translate(18.500,29.300) rotate(-60)"><path d="M0 0l4-2.700v5.400z" fill="#e9cfa3"/><path d="M0 0l1.600-1.100v2.200z" fill="#222"/><rect x="4" y="-2.700" width="9" height="5.400" fill="#f1b530"/><rect x="4" y="-2.700" width="9" height="1.800" fill="#f9d36c"/><rect x="4" y=".9" width="9" height="1.800" fill="#d9981a"/><rect x="13" y="-2.700" width="2.700" height="5.400" fill="#c3141f"/></g></svg>
<svg class="abs" style="left:944.5px;top:52px" width="32" height="33" viewBox="0 0 32 33"><rect x="3" y="2.700" width="25.500" height="27.500" rx="2" fill="#fdfdfd" stroke="#858585" stroke-width="1.100"/><rect x="3.800" y="3.500" width="24" height="26" rx="1.500" fill="none" stroke="#d9d9d9" stroke-width=".8"/><rect x="6" y="5.500" width="19.500" height="2.600" fill="#9a9a9a"/><rect x="6" y="10.8" width="1.900" height="1.900" fill="#6a6a6a"/><rect x="9" y="11.1" width="16.5" height="1.300" fill="#8a8a8a"/><rect x="6" y="15.0" width="1.900" height="1.900" fill="#6a6a6a"/><rect x="9" y="15.3" width="16.5" height="1.300" fill="#8a8a8a"/><rect x="6" y="19.200000000000003" width="1.900" height="1.900" fill="#6a6a6a"/><rect x="9" y="19.5" width="13" height="1.300" fill="#8a8a8a"/><rect x="6" y="23.400000000000002" width="1.900" height="1.900" fill="#6a6a6a"/><rect x="9" y="23.700000000000003" width="10" height="1.300" fill="#8a8a8a"/><g transform="translate(18.500,29.300) rotate(-60)"><path d="M0 0l4-2.700v5.400z" fill="#e9cfa3"/><path d="M0 0l1.600-1.100v2.200z" fill="#222"/><rect x="4" y="-2.700" width="9" height="5.400" fill="#f1b530"/><rect x="4" y="-2.700" width="9" height="1.800" fill="#f9d36c"/><rect x="4" y=".9" width="9" height="1.800" fill="#d9981a"/><rect x="13" y="-2.700" width="2.700" height="5.400" fill="#c3141f"/></g></svg>
<svg class="abs" style="left:991.3px;top:52px" width="32" height="33" viewBox="0 0 32 33"><rect x="3" y="2.700" width="25.500" height="27.500" rx="2" fill="#fdfdfd" stroke="#858585" stroke-width="1.100"/><rect x="3.800" y="3.500" width="24" height="26" rx="1.500" fill="none" stroke="#d9d9d9" stroke-width=".8"/><rect x="6" y="5.500" width="19.500" height="2.600" fill="#9a9a9a"/><rect x="6" y="10.8" width="1.900" height="1.900" fill="#6a6a6a"/><rect x="9" y="11.1" width="16.5" height="1.300" fill="#8a8a8a"/><rect x="6" y="15.0" width="1.900" height="1.900" fill="#6a6a6a"/><rect x="9" y="15.3" width="16.5" height="1.300" fill="#8a8a8a"/><rect x="6" y="19.200000000000003" width="1.900" height="1.900" fill="#6a6a6a"/><rect x="9" y="19.5" width="13" height="1.300" fill="#8a8a8a"/><rect x="6" y="23.400000000000002" width="1.900" height="1.900" fill="#6a6a6a"/><rect x="9" y="23.700000000000003" width="10" height="1.300" fill="#8a8a8a"/><g transform="translate(18.500,29.300) rotate(-60)"><path d="M0 0l4-2.700v5.400z" fill="#e9cfa3"/><path d="M0 0l1.600-1.100v2.200z" fill="#222"/><rect x="4" y="-2.700" width="9" height="5.400" fill="#f1b530"/><rect x="4" y="-2.700" width="9" height="1.800" fill="#f9d36c"/><rect x="4" y=".9" width="9" height="1.800" fill="#d9981a"/><rect x="13" y="-2.700" width="2.700" height="5.400" fill="#c3141f"/></g></svg>
<svg class="abs" style="left:1054.4px;top:52px" width="32" height="33" viewBox="0 0 32 33"><rect x="3" y="2.700" width="25.500" height="27.500" rx="2" fill="#fdfdfd" stroke="#858585" stroke-width="1.100"/><rect x="3.800" y="3.500" width="24" height="26" rx="1.500" fill="none" stroke="#d9d9d9" stroke-width=".8"/><rect x="6" y="5.500" width="19.500" height="2.600" fill="#9a9a9a"/><rect x="6" y="10.8" width="1.900" height="1.900" fill="#6a6a6a"/><rect x="9" y="11.1" width="16.5" height="1.300" fill="#8a8a8a"/><rect x="6" y="15.0" width="1.900" height="1.900" fill="#6a6a6a"/><rect x="9" y="15.3" width="16.5" height="1.300" fill="#8a8a8a"/><rect x="6" y="19.200000000000003" width="1.900" height="1.900" fill="#6a6a6a"/><rect x="9" y="19.5" width="13" height="1.300" fill="#8a8a8a"/><rect x="6" y="23.400000000000002" width="1.900" height="1.900" fill="#6a6a6a"/><rect x="9" y="23.700000000000003" width="10" height="1.300" fill="#8a8a8a"/><g transform="translate(18.500,29.300) rotate(-60)"><path d="M0 0l4-2.700v5.400z" fill="#e9cfa3"/><path d="M0 0l1.600-1.100v2.200z" fill="#222"/><rect x="4" y="-2.700" width="9" height="5.400" fill="#f1b530"/><rect x="4" y="-2.700" width="9" height="1.800" fill="#f9d36c"/><rect x="4" y=".9" width="9" height="1.800" fill="#d9981a"/><rect x="13" y="-2.700" width="2.700" height="5.400" fill="#c3141f"/></g></svg>
<svg class="abs" style="left:1118.4px;top:52px" width="32" height="33" viewBox="0 0 32 33"><rect x="3" y="2.700" width="25.500" height="27.500" rx="2" fill="#fdfdfd" stroke="#858585" stroke-width="1.100"/><rect x="3.800" y="3.500" width="24" height="26" rx="1.500" fill="none" stroke="#d9d9d9" stroke-width=".8"/><rect x="6" y="5.500" width="19.500" height="2.600" fill="#9a9a9a"/><rect x="6" y="10.8" width="1.900" height="1.900" fill="#6a6a6a"/><rect x="9" y="11.1" width="16.5" height="1.300" fill="#8a8a8a"/><rect x="6" y="15.0" width="1.900" height="1.900" fill="#6a6a6a"/><rect x="9" y="15.3" width="16.5" height="1.300" fill="#8a8a8a"/><rect x="6" y="19.200000000000003" width="1.900" height="1.900" fill="#6a6a6a"/><rect x="9" y="19.5" width="13" height="1.300" fill="#8a8a8a"/><rect x="6" y="23.400000000000002" width="1.900" height="1.900" fill="#6a6a6a"/><rect x="9" y="23.700000000000003" width="10" height="1.300" fill="#8a8a8a"/><g transform="translate(18.500,29.300) rotate(-60)"><path d="M0 0l4-2.700v5.400z" fill="#e9cfa3"/><path d="M0 0l1.600-1.100v2.200z" fill="#222"/><rect x="4" y="-2.700" width="9" height="5.400" fill="#f1b530"/><rect x="4" y="-2.700" width="9" height="1.800" fill="#f9d36c"/><rect x="4" y=".9" width="9" height="1.800" fill="#d9981a"/><rect x="13" y="-2.700" width="2.700" height="5.400" fill="#c3141f"/></g></svg>
<svg class="abs" style="left:1174.6px;top:52px" width="32" height="33" viewBox="0 0 32 33"><rect x="3" y="2.700" width="25.500" height="27.500" rx="2" fill="#fdfdfd" stroke="#858585" stroke-width="1.100"/><rect x="3.800" y="3.500" width="24" height="26" rx="1.500" fill="none" stroke="#d9d9d9" stroke-width=".8"/><rect x="6" y="5.500" width="19.500" height="2.600" fill="#9a9a9a"/><rect x="6" y="10.8" width="1.900" height="1.900" fill="#6a6a6a"/><rect x="9" y="11.1" width="16.5" height="1.300" fill="#8a8a8a"/><rect x="6" y="15.0" width="1.900" height="1.900" fill="#6a6a6a"/><rect x="9" y="15.3" width="16.5" height="1.300" fill="#8a8a8a"/><rect x="6" y="19.200000000000003" width="1.900" height="1.900" fill="#6a6a6a"/><rect x="9" y="19.5" width="13" height="1.300" fill="#8a8a8a"/><rect x="6" y="23.400000000000002" width="1.900" height="1.900" fill="#6a6a6a"/><rect x="9" y="23.700000000000003" width="10" height="1.300" fill="#8a8a8a"/><g transform="translate(18.500,29.300) rotate(-60)"><path d="M0 0l4-2.700v5.400z" fill="#e9cfa3"/><path d="M0 0l1.600-1.100v2.200z" fill="#222"/><rect x="4" y="-2.700" width="9" height="5.400" fill="#f1b530"/><rect x="4" y="-2.700" width="9" height="1.800" fill="#f9d36c"/><rect x="4" y=".9" width="9" height="1.800" fill="#d9981a"/><rect x="13" y="-2.700" width="2.700" height="5.400" fill="#c3141f"/></g></svg>
<svg class="abs" style="left:1232.4px;top:52px" width="32" height="33" viewBox="0 0 32 33"><rect x="3" y="2.700" width="25.500" height="27.500" rx="2" fill="#fdfdfd" stroke="#858585" stroke-width="1.100"/><rect x="3.800" y="3.500" width="24" height="26" rx="1.500" fill="none" stroke="#d9d9d9" stroke-width=".8"/><rect x="6" y="5.500" width="19.500" height="2.600" fill="#9a9a9a"/><rect x="6" y="10.8" width="1.900" height="1.900" fill="#6a6a6a"/><rect x="9" y="11.1" width="16.5" height="1.300" fill="#8a8a8a"/><rect x="6" y="15.0" width="1.900" height="1.900" fill="#6a6a6a"/><rect x="9" y="15.3" width="16.5" height="1.300" fill="#8a8a8a"/><rect x="6" y="19.200000000000003" width="1.900" height="1.900" fill="#6a6a6a"/><rect x="9" y="19.5" width="13" height="1.300" fill="#8a8a8a"/><rect x="6" y="23.400000000000002" width="1.900" height="1.900" fill="#6a6a6a"/><rect x="9" y="23.700000000000003" width="10" height="1.300" fill="#8a8a8a"/><g transform="translate(18.500,29.300) rotate(-60)"><path d="M0 0l4-2.700v5.400z" fill="#e9cfa3"/><path d="M0 0l1.600-1.100v2.200z" fill="#222"/><rect x="4" y="-2.700" width="9" height="5.400" fill="#f1b530"/><rect x="4" y="-2.700" width="9" height="1.800" fill="#f9d36c"/><rect x="4" y=".9" width="9" height="1.800" fill="#d9981a"/><rect x="13" y="-2.700" width="2.700" height="5.400" fill="#c3141f"/></g></svg>
<svg class="abs" style="left:815.7px;top:53px;opacity:0.5" width="16" height="16" viewBox="0 0 32 32"><rect x="4" y="5.500" width="16" height="24" rx="1.500" fill="#e6e6e6" stroke="#bdbdbd" stroke-width=".7"/><rect x="5" y="7.500" width="13.500" height="4.500" fill="#b5d58a" stroke="#8fae6a" stroke-width=".5"/><path d="M12 9.500h5" stroke="#5f7f3f" stroke-width="1.200"/><rect x="5.0" y="14.0" width="2.700" height="2.900" fill="#4a4a4a"/><rect x="5.0" y="17.8" width="2.700" height="2.900" fill="#4a4a4a"/><rect x="5.0" y="21.6" width="2.700" height="2.900" fill="#4a4a4a"/><rect x="5.0" y="25.4" width="2.700" height="2.900" fill="#4a4a4a"/><rect x="8.5" y="14.0" width="2.700" height="2.900" fill="#4a4a4a"/><rect x="8.5" y="17.8" width="2.700" height="2.900" fill="#4a4a4a"/><rect x="8.5" y="21.6" width="2.700" height="2.900" fill="#4a4a4a"/><rect x="8.5" y="25.4" width="2.700" height="2.900" fill="#4a4a4a"/><rect x="12.0" y="14.0" width="2.700" height="2.900" fill="#4a4a4a"/><rect x="12.0" y="17.8" width="2.700" height="2.900" fill="#4a4a4a"/><rect x="12.0" y="21.6" width="2.700" height="2.900" fill="#4a4a4a"/><rect x="12.0" y="25.4" width="2.700" height="2.900" fill="#4a4a4a"/><rect x="15.5" y="14.0" width="2.700" height="2.900" fill="#4a4a4a"/><rect x="15.5" y="17.8" width="2.700" height="2.900" fill="#4a4a4a"/><rect x="15.5" y="21.6" width="2.700" height="2.900" fill="#4a4a4a"/><rect x="15.5" y="25.4" width="2.700" height="2.900" fill="#4a4a4a"/><rect x="17" y="29.300" width="13" height="1.200" fill="#9a9a9a" opacity=".7"/><g transform="translate(18.300,29.300) rotate(-58)"><path d="M0 0l4-2.600v5.200z" fill="#e9cfa3"/><path d="M0 0l1.600-1v2z" fill="#222"/><rect x="4" y="-2.600" width="8.500" height="5.200" fill="#f3bd3c"/><rect x="4" y="-2.600" width="8.500" height="1.700" fill="#fbd877"/><rect x="4" y=".9" width="8.500" height="1.700" fill="#dc9d1e"/><rect x="12.500" y="-2.600" width="2.600" height="5.200" fill="#c6202a"/></g></svg>
<svg class="abs" style="left:815.7px;top:75px;opacity:0.5" width="16" height="16" viewBox="0 0 32 32"><rect x="4" y="5.500" width="16" height="24" rx="1.500" fill="#e6e6e6" stroke="#bdbdbd" stroke-width=".7"/><rect x="5" y="7.500" width="13.500" height="4.500" fill="#b5d58a" stroke="#8fae6a" stroke-width=".5"/><path d="M12 9.500h5" stroke="#5f7f3f" stroke-width="1.200"/><rect x="5.0" y="14.0" width="2.700" height="2.900" fill="#4a4a4a"/><rect x="5.0" y="17.8" width="2.700" height="2.900" fill="#4a4a4a"/><rect x="5.0" y="21.6" width="2.700" height="2.900" fill="#4a4a4a"/><rect x="5.0" y="25.4" width="2.700" height="2.900" fill="#4a4a4a"/><rect x="8.5" y="14.0" width="2.700" height="2.900" fill="#4a4a4a"/><rect x="8.5" y="17.8" width="2.700" height="2.900" fill="#4a4a4a"/><rect x="8.5" y="21.6" width="2.700" height="2.900" fill="#4a4a4a"/><rect x="8.5" y="25.4" width="2.700" height="2.900" fill="#4a4a4a"/><rect x="12.0" y="14.0" width="2.700" height="2.900" fill="#4a4a4a"/><rect x="12.0" y="17.8" width="2.700" height="2.900" fill="#4a4a4a"/><rect x="12.0" y="21.6" width="2.700" height="2.900" fill="#4a4a4a"/><rect x="12.0" y="25.4" width="2.700" height="2.900" fill="#4a4a4a"/><rect x="15.5" y="14.0" width="2.700" height="2.900" fill="#4a4a4a"/><rect x="15.5" y="17.8" width="2.700" height="2.900" fill="#4a4a4a"/><rect x="15.5" y="21.6" width="2.700" height="2.900" fill="#4a4a4a"/><rect x="15.5" y="25.4" width="2.700" height="2.900" fill="#4a4a4a"/><circle cx="24.700" cy="25" r="6.500" fill="url(#rp)" stroke="#9a1f1a" stroke-width=".6"/><path d="M22 22.300l5.400 5.400M27.400 22.300l-5.400 5.400" stroke="#fff" stroke-width="2.500"/></svg>
<svg class="abs" style="left:817.5px;top:97px;opacity:0.5" width="16" height="16" viewBox="0 0 32 32"><rect x="4" y="5.500" width="16" height="24" rx="1.500" fill="#e6e6e6" stroke="#bdbdbd" stroke-width=".7"/><rect x="5" y="7.500" width="13.500" height="4.500" fill="#b5d58a" stroke="#8fae6a" stroke-width=".5"/><path d="M12 9.500h5" stroke="#5f7f3f" stroke-width="1.200"/><rect x="5.0" y="14.0" width="2.700" height="2.900" fill="#4a4a4a"/><rect x="5.0" y="17.8" width="2.700" height="2.900" fill="#4a4a4a"/><rect x="5.0" y="21.6" width="2.700" height="2.900" fill="#4a4a4a"/><rect x="5.0" y="25.4" width="2.700" height="2.900" fill="#4a4a4a"/><rect x="8.5" y="14.0" width="2.700" height="2.900" fill="#4a4a4a"/><rect x="8.5" y="17.8" width="2.700" height="2.900" fill="#4a4a4a"/><rect x="8.5" y="21.6" width="2.700" height="2.900" fill="#4a4a4a"/><rect x="8.5" y="25.4" width="2.700" height="2.900" fill="#4a4a4a"/><rect x="12.0" y="14.0" width="2.700" height="2.900" fill="#4a4a4a"/><rect x="12.0" y="17.8" width="2.700" height="2.900" fill="#4a4a4a"/><rect x="12.0" y="21.6" width="2.700" height="2.900" fill="#4a4a4a"/><rect x="12.0" y="25.4" width="2.700" height="2.900" fill="#4a4a4a"/><rect x="15.5" y="14.0" width="2.700" height="2.900" fill="#4a4a4a"/><rect x="15.5" y="17.8" width="2.700" height="2.900" fill="#4a4a4a"/><rect x="15.5" y="21.6" width="2.700" height="2.900" fill="#4a4a4a"/><rect x="15.5" y="25.4" width="2.700" height="2.900" fill="#4a4a4a"/><path d="M17.500 16.500h7l3 3v8.500h-10z" fill="#fbfbfb" stroke="#c9c9c9" stroke-width=".7"/><path d="M22.500 20.500h6l3 3v8h-9z" fill="#ffffff" stroke="#c4c4c4" stroke-width=".7"/><path d="M28.500 20.500v3h3" fill="#e9e9e9" stroke="#c4c4c4" stroke-width=".6"/></svg>
<svg class="abs" style="left:1280px;top:52px" width="16" height="16" viewBox="0 0 32 32"><rect x="3" y="2.700" width="25.500" height="27.500" rx="2" fill="#fdfdfd" stroke="#858585" stroke-width="1.100"/><rect x="3.800" y="3.500" width="24" height="26" rx="1.500" fill="none" stroke="#d9d9d9" stroke-width=".8"/><rect x="6" y="5.500" width="19.500" height="2.600" fill="#9a9a9a"/><rect x="6" y="10.8" width="1.900" height="1.900" fill="#6a6a6a"/><rect x="9" y="11.1" width="16.5" height="1.300" fill="#8a8a8a"/><rect x="6" y="15.0" width="1.900" height="1.900" fill="#6a6a6a"/><rect x="9" y="15.3" width="16.5" height="1.300" fill="#8a8a8a"/><rect x="6" y="19.200000000000003" width="1.900" height="1.900" fill="#6a6a6a"/><rect x="9" y="19.5" width="13" height="1.300" fill="#8a8a8a"/><rect x="6" y="23.400000000000002" width="1.900" height="1.900" fill="#6a6a6a"/><rect x="9" y="23.700000000000003" width="10" height="1.300" fill="#8a8a8a"/><g transform="translate(18.500,29.300) rotate(-60)"><path d="M0 0l4-2.700v5.400z" fill="#e9cfa3"/><path d="M0 0l1.600-1.100v2.200z" fill="#222"/><rect x="4" y="-2.700" width="9" height="5.400" fill="#f1b530"/><rect x="4" y="-2.700" width="9" height="1.800" fill="#f9d36c"/><rect x="4" y=".9" width="9" height="1.800" fill="#d9981a"/><rect x="13" y="-2.700" width="2.700" height="5.400" fill="#c3141f"/></g></svg>
<svg class="abs" style="left:1282px;top:74px" width="16" height="16" viewBox="0 0 32 32"><rect x="3" y="2.700" width="25.500" height="27.500" rx="2" fill="#fdfdfd" stroke="#858585" stroke-width="1.100"/><rect x="3.800" y="3.500" width="24" height="26" rx="1.500" fill="none" stroke="#d9d9d9" stroke-width=".8"/><rect x="6" y="5.500" width="19.500" height="2.600" fill="#9a9a9a"/><rect x="6" y="10.8" width="1.900" height="1.900" fill="#6a6a6a"/><rect x="9" y="11.1" width="16.5" height="1.300" fill="#8a8a8a"/><rect x="6" y="15.0" width="1.900" height="1.900" fill="#6a6a6a"/><rect x="9" y="15.3" width="16.5" height="1.300" fill="#8a8a8a"/><rect x="6" y="19.200000000000003" width="1.900" height="1.900" fill="#6a6a6a"/><rect x="9" y="19.5" width="13" height="1.300" fill="#8a8a8a"/><rect x="6" y="23.400000000000002" width="1.900" height="1.900" fill="#6a6a6a"/><rect x="9" y="23.700000000000003" width="10" height="1.300" fill="#8a8a8a"/><g transform="translate(18.500,29.300) rotate(-60)"><path d="M0 0l4-2.700v5.400z" fill="#e9cfa3"/><path d="M0 0l1.600-1.100v2.200z" fill="#222"/><rect x="4" y="-2.700" width="9" height="5.400" fill="#f1b530"/><rect x="4" y="-2.700" width="9" height="1.800" fill="#f9d36c"/><rect x="4" y=".9" width="9" height="1.800" fill="#d9981a"/><rect x="13" y="-2.700" width="2.700" height="5.400" fill="#c3141f"/></g></svg>
<svg class="abs" style="left:1282px;top:96px" width="16" height="16" viewBox="0 0 32 32"><rect x="3" y="2.700" width="25.500" height="27.500" rx="2" fill="#fdfdfd" stroke="#858585" stroke-width="1.100"/><rect x="3.800" y="3.500" width="24" height="26" rx="1.500" fill="none" stroke="#d9d9d9" stroke-width=".8"/><rect x="6" y="5.500" width="19.500" height="2.600" fill="#9a9a9a"/><rect x="6" y="10.8" width="1.900" height="1.900" fill="#6a6a6a"/><rect x="9" y="11.1" width="16.5" height="1.300" fill="#8a8a8a"/><rect x="6" y="15.0" width="1.900" height="1.900" fill="#6a6a6a"/><rect x="9" y="15.3" width="16.5" height="1.300" fill="#8a8a8a"/><rect x="6" y="19.200000000000003" width="1.900" height="1.900" fill="#6a6a6a"/><rect x="9" y="19.5" width="13" height="1.300" fill="#8a8a8a"/><rect x="6" y="23.400000000000002" width="1.900" height="1.900" fill="#6a6a6a"/><rect x="9" y="23.700000000000003" width="10" height="1.300" fill="#8a8a8a"/><g transform="translate(18.500,29.300) rotate(-60)"><path d="M0 0l4-2.700v5.400z" fill="#e9cfa3"/><path d="M0 0l1.600-1.100v2.200z" fill="#222"/><rect x="4" y="-2.700" width="9" height="5.400" fill="#f1b530"/><rect x="4" y="-2.700" width="9" height="1.800" fill="#f9d36c"/><rect x="4" y=".9" width="9" height="1.800" fill="#d9981a"/><rect x="13" y="-2.700" width="2.700" height="5.400" fill="#c3141f"/></g></svg>
</div>
<div id="main" class="abs" style="left:0;top:137px;width:1440px;height:733px;background:#fff">
</div>
<div class="bar" style="left:2px;top:139.5px;width:1398px;height:31px;border-radius:4px 0 0 4px"></div>
<div class="bar" style="left:2px;top:172.5px;width:1398px;height:31px;border-radius:4px 0 0 4px"></div>
<div class="bar" style="left:2px;top:372.5px;width:1398px;height:31px;border-radius:4px 0 0 4px"></div>
<div class="bar" style="left:2px;top:405.5px;width:1398px;height:31px;border-radius:4px 0 0 4px"></div>
<div class="nb" style="left:6px;top:209px;width:54px;height:30.5px;line-height:30px">Buildings</div>
<div class="nb" style="left:61px;top:209px;width:308px;height:30.5px;line-height:30px">Household Contents</div>
<div class="nb" style="left:370px;top:209px;width:60px;height:30.5px;line-height:30px;text-align:left;padding-left:5px">Pers</div>
<div class="nb" style="left:65px;top:246px;width:182px;height:30.5px;line-height:30px">Contents General</div>
<div class="nb" style="left:249px;top:246px;width:116px;height:30.5px;line-height:30px">Accidental Damage</div>
<div class="nb" style="left:252px;top:282px;width:109px;height:30.5px;line-height:30px">Accidental Damage</div>
<div class="nb" style="left:72px;top:319px;width:73px;height:30.5px;line-height:30px">High Security</div>
<div class="nb" style="left:147px;top:319px;width:93px;height:30.5px;line-height:30px">Standard Security</div>
<div class="nb" style="left:256px;top:319px;width:102px;height:30.5px;line-height:30px">Accidental Damage</div>
<div class="nb" style="left:69px;top:282px;width:175px;height:30.5px;line-height:29px;border:1px solid #e8760a;background:linear-gradient(#ffa200 0,#ff8a00 40%,#ff6a00 75%,#ff5400 100%);box-shadow:1.5px 3px 3px rgba(0,0,0,.8);color:#222">Content General</div>
<div class="abs" style="left:0;top:137px;width:1px;height:713px;background:#9aa0b0"></div>
<div class="abs" style="left:1400px;top:137px;width:18px;height:713px;background:linear-gradient(90deg,#d4d4d4 0,#ececec 35%,#fafafa 100%)"></div>
<div class="abs" style="left:1427px;top:142px;width:2px;height:722px;background:#c4c6c8;border-radius:1px"></div>
<div class="abs" style="left:1418px;top:591px;width:23px;height:10px;border:1px solid #9a9a9a;border-radius:2px;background:linear-gradient(#fafafa,#dcdcdc)"></div>
<div class="abs" style="left:1406px;top:142px;width:0;height:0;border-left:3.5px solid transparent;border-right:3.5px solid transparent;border-bottom:4px solid #8a8a8a"></div>
<div class="abs" style="left:1406px;top:839px;width:0;height:0;border-left:3.5px solid transparent;border-right:3.5px solid transparent;border-top:4px solid #777"></div>
<div class="abs" style="left:1px;top:837px;width:1400px;height:13px;background:linear-gradient(#e4e4e4,#f2f2f2);border-bottom:1px solid #a3a8b8"></div>
<div class="abs" style="left:14px;top:838px;width:1111px;height:11px;border:1px solid #b4b4b8;border-radius:2px;background:linear-gradient(#ededed 0,#e6e6e6 45%,#cfcfd3 55%,#c8c8cc 100%)"></div>
<div class="abs" style="left:5px;top:840px;width:0;height:0;border-top:3.5px solid transparent;border-bottom:3.5px solid transparent;border-right:4px solid #888"></div>
<div class="abs" style="left:1391px;top:840px;width:0;height:0;border-top:3.5px solid transparent;border-bottom:3.5px solid transparent;border-left:4px solid #888"></div>
<div class="abs" style="left:566px;top:841px;width:6px;height:5px;background:repeating-linear-gradient(90deg,#8a8a8a 0 1px,#f4f4f4 1px 2px)"></div>
<div class="abs" style="left:0;top:850px;width:1418px;height:20px;background:#f2eeed"></div>
<div class="abs" style="left:14px;top:864px;width:27px;height:27px;border-radius:50%;border:1.5px solid #1d5a8c;background:linear-gradient(#d8e4ee,#9fb8cc)"></div>
<div class="abs" style="left:1411px;top:853px;width:5px;height:9px;border:1px solid #9a9a9a;border-bottom:none;border-radius:2.5px 2.5px 0 0"></div>
<div id="dlg" class="abs" style="left:396px;top:139px;width:1000px;height:700px;border-radius:7px;background:#1c2833;box-shadow:2px 3px 11px 4px rgba(0,0,0,.5),0 1px 4px 1px rgba(0,0,0,.55),0 0 3px 1px rgba(0,0,0,.5)">
<div class="abs" style="left:1px;top:1px;width:998px;height:698px;border-radius:6px;background:radial-gradient(ellipse 120px 15px at 80px 14px,rgba(255,255,255,.6),rgba(255,255,255,.25) 60%,rgba(255,255,255,0) 100%),radial-gradient(ellipse 130px 22px at 900px 6px,rgba(255,255,255,.35),rgba(255,255,255,0) 100%),linear-gradient(115deg,rgba(255,255,255,0) 0,rgba(255,255,255,0) 300px,rgba(255,255,255,.10) 330px,rgba(255,255,255,0) 420px,rgba(255,255,255,.08) 600px,rgba(255,255,255,0) 700px),linear-gradient(#7c94b2 0,#87a0be 10px,#9ab3d0 22px,#a6bedb 28px,#b4c3d4 60px,#bccbdc 185px,#b4d2f3 200px,#b3d4f8 100%);box-shadow:inset 0 0 0 1px rgba(255,255,255,.7)"></div>
<div class="abs" style="left:2px;top:33.5px;width:5px;height:31.0px;background:linear-gradient(rgba(50,60,75,.42),rgba(90,100,115,.18))"></div><div class="abs" style="left:993px;top:33.5px;width:5px;height:31.0px;background:linear-gradient(rgba(50,60,75,.42),rgba(90,100,115,.18))"></div><div class="abs" style="left:2px;top:233.5px;width:5px;height:31.0px;background:linear-gradient(rgba(50,60,75,.42),rgba(90,100,115,.18))"></div><div class="abs" style="left:993px;top:233.5px;width:5px;height:31.0px;background:linear-gradient(rgba(50,60,75,.42),rgba(90,100,115,.18))"></div><div class="abs" style="left:2px;top:266.5px;width:5px;height:31.0px;background:linear-gradient(rgba(50,60,75,.42),rgba(90,100,115,.18))"></div><div class="abs" style="left:993px;top:266.5px;width:5px;height:31.0px;background:linear-gradient(rgba(50,60,75,.42),rgba(90,100,115,.18))"></div><div class="abs" style="left:2px;top:70px;width:5px;height:31px;background:rgba(70,80,95,.22)"></div>
<svg class="abs" style="left:8px;top:9px" width="18" height="12" viewBox="0 0 18 12"><path d="M13 1C7 1 1.500 2.500 .8 5.200c-.5 2 3 3.300 8.200 3.300-3-.6-4.600-1.700-4.200-3.200C5.300 3.400 8.500 1.800 13 1z" fill="#2a2a2e"/><rect x="13.500" y="3" width="3" height="5.500" fill="#ee1c24"/><rect x="1" y="10" width="15.500" height="1" fill="#9aa3ad"/></svg>
<div class="abs" style="left:29px;top:8px;font-size:12px;line-height:14px;white-space:nowrap;text-shadow:0 0 6px rgba(255,255,255,.9),0 0 3px rgba(255,255,255,.6)">Cover type particulars</div>
<div class="abs" style="left:392px;top:10px;width:156px;height:9px;filter:blur(2.2px);opacity:.42"><div class="abs" style="left:0;top:1px;width:36px;height:7px;background:#2a3a55;border-radius:3px"></div><div class="abs" style="left:42px;top:1px;width:44px;height:7px;background:#2a3a55;border-radius:3px"></div><div class="abs" style="left:92px;top:2px;width:24px;height:6px;background:#2a3a55;border-radius:3px"></div><div class="abs" style="left:122px;top:1px;width:34px;height:8px;background:#2a3a55;border-radius:3px"></div></div>
<div class="abs" style="left:801px;top:1px;width:55px;height:19px;border:1px solid #5d6b7c;border-top:none;border-radius:0 0 4px 4px;background:linear-gradient(#c9d4e2 0,#b4c2d4 48%,#93a6be 52%,#aebfd4 100%);box-shadow:0 0 0 1px rgba(255,255,255,.55)"></div><div class="abs" style="left:828px;top:1px;width:1px;height:18px;background:#5d6b7c;box-shadow:1px 0 0 rgba(255,255,255,.5)"></div>
<div class="abs" style="left:890px;top:1px;width:103px;height:19px;border:1px solid #5d6b7c;border-top:none;border-radius:0 0 4px 4px;background:linear-gradient(#c9d4e2 0,#b4c2d4 48%,#93a6be 52%,#aebfd4 100%);box-shadow:0 0 0 1px rgba(255,255,255,.55)"></div><div class="abs" style="left:918px;top:1px;width:1px;height:18px;background:#5d6b7c;box-shadow:1px 0 0 rgba(255,255,255,.5)"></div>
<div class="abs" style="left:945px;top:1px;width:47px;height:18px;border-left:1px solid #5d2a24;border-radius:0 0 3px 0;background:linear-gradient(#dca89c 0,#cb6a55 45%,#b83a22 52%,#c24a30 80%,#d5826a 100%)"></div>
<svg class="abs" style="left:801px;top:1px" width="192" height="19" viewBox="0 0 192 19"><g fill="none" stroke="#4a5566" stroke-width="1"><rect x="10.500" y="5.500" width="6" height="7" fill="#e8edf3"/><path d="M13.500 2l3 3h-6zM13.500 16l3-3h-6zM7.500 9l3-3v6zM19.500 9l-3-3v6z" fill="#f4f6f9"/><rect x="35.500" y="4.500" width="11" height="8" fill="#e8edf3"/><path d="M37 8.500h5m-2-2l2 2-2 2" stroke="#333"/></g><rect x="98" y="10" width="11" height="4" fill="#fff" stroke="#4a5566"/><rect x="125.500" y="5.500" width="10" height="8" fill="#fff" stroke="#4a5566"/><rect x="128.500" y="8.500" width="4" height="2" fill="#b9c6d6" stroke="#4a5566"/><path d="M162 5h3.500l2 2.500 2-2.500h3.500l-3.700 4.500 3.700 4.500h-3.500l-2-2.500-2 2.500h-3.500l3.700-4.500z" fill="#fff" stroke="#5a3030" stroke-width=".8"/></svg>
<div class="abs" style="left:7px;top:29px;width:986px;height:664px;border:1px solid #4c5b6b;background:#fff"><div class="abs" style="left:0;top:642px;width:984px;height:20px;background:#f2eeed"></div></div>
</div>
<div id="dc" class="abs" style="left:0;top:0;width:0;height:0">
<div class="grp" style="left:510px;top:188px;width:430px;height:96px"></div><div class="gh" style="left:516px;top:182px;letter-spacing:0px">General</div>
<div class="grp" style="left:510px;top:299px;width:430px;height:122px"></div><div class="gh" style="left:516px;top:293px;letter-spacing:0px">Underwriting</div>
<div class="grp" style="left:510px;top:437px;width:430px;height:144px"></div><div class="gh" style="left:516px;top:430px;letter-spacing:-0.1px">Pricing adjustments</div>
<div class="grp" style="left:510px;top:597px;width:430px;height:69px"></div><div class="gh" style="left:516px;top:590px;letter-spacing:-0.12px">Renewal adjustments</div>
<div class="grp" style="left:510px;top:682px;width:430px;height:81px"></div><div class="gh" style="left:516px;top:675px;letter-spacing:0px">Claims</div>
<div class="grp" style="left:952px;top:188px;width:430px;height:96px"></div><div class="gh" style="left:958px;top:182px;letter-spacing:-0.3px">Risk sharing</div>
<div class="grp" style="left:952px;top:299px;width:430px;height:210px"></div><div class="gh" style="left:958px;top:293px;letter-spacing:0px">Finance</div>
<div class="grp" style="left:952px;top:524px;width:430px;height:95px"></div><div class="gh" style="left:958px;top:517px;letter-spacing:0px">Reserving</div>
<div class="grp" style="left:952px;top:635px;width:430px;height:79px"></div><div class="gh" style="left:958px;top:628px;letter-spacing:0px">Availability</div>
<div class="lb" style="left:520px;top:208px">Cover type name</div>
<div class="lb" style="left:520px;top:234px">Statutory class</div>
<div class="lb" style="left:520px;top:260px">Statutory risk type</div>
<div class="lb" style="left:520px;top:345px">Question set (if applicable)</div>
<div class="lb" style="left:520px;top:371px">Sum insured formula (if applicable)</div>
<div class="lb" style="left:520px;top:397px">EML formula (if applicable)</div>
<div class="lb" style="left:520px;top:456px">Attribute loadings/discounts</div>
<div class="lb" style="left:520px;top:487px">No claim discounts</div>
<div class="lb" style="left:520px;top:519px">Payment frequency adjustments</div>
<div class="lb" style="left:520px;top:551px">Re-rating</div>
<div class="lb" style="left:520px;top:616px">Renewal TSI adjustment</div>
<div class="lb" style="left:520px;top:642px">Renewal premium adjustment</div>
<div class="lb" style="left:520px;top:701px">Claim amount</div>
<div class="lb" style="left:520px;top:733px">Aggregate groups</div>
<div class="lb" style="left:962px;top:208px">Add-on provider (if applicable)</div>
<div class="lb" style="left:962px;top:234px">Special insurance applicable</div>
<div class="lb" style="left:962px;top:260px">Reinsurance treaties applicable</div>
<div class="lb" style="left:962px;top:319px">VAT</div>
<div class="lb" style="left:962px;top:351px">Posting type</div>
<div class="lb" style="left:962px;top:415px">Preliminary accrual</div>
<div class="lb" style="left:962px;top:446px">Agent fees payable</div>
<div class="lb" style="left:962px;top:478px">Commission receivable</div>
<div class="lb" style="left:962px;top:543px">UPR</div>
<div class="lb" style="left:962px;top:569px">IBNR</div>
<div class="lb" style="left:962px;top:595px">Custom reserves</div>
<div class="lb" style="left:962px;top:654px">Available from</div>
<div class="lb" style="left:962px;top:685px">Available to</div>
<div class="tb" style="left:725px;top:201px;width:210px;height:26px">Content General</div>
<div class="cb" style="left:725px;top:227px;width:210px;height:25px">IFRS Property<i></i></div>
<div class="cb" style="left:725px;top:253px;width:210px;height:25px">IFRS Constant<i></i></div>
<div class="ck" style="left:725px;top:313px"></div><div class="lb" style="left:742px;top:314px">Compulsory</div>
<div class="ck" style="left:816px;top:313px"></div><div class="lb" style="left:833px;top:314px">Sub limit</div>
<div class="cb" style="left:725px;top:338px;width:210px;height:25px">DAC PL Content cover<i></i></div>
<div class="cb" style="left:725px;top:364px;width:210px;height:25px">Content sum insured<i></i></div>
<div class="cb" style="left:725px;top:390px;width:210px;height:25px"><i></i></div>
<div class="bt" style="left:725px;top:452px;width:210px;height:25px;">Edit...</div>
<div class="bt" style="left:725px;top:484px;width:210px;height:25px;">Edit...</div>
<div class="bt" style="left:725px;top:516px;width:210px;height:25px;">Edit...</div>
<div class="ck" style="left:725px;top:546px"></div><div class="lb" style="left:742px;top:546px">Skip on renewal</div>
<div class="ck" style="left:725px;top:562px"></div><div class="lb" style="left:742px;top:562px">Skip on endorsement</div>
<div class="cb" style="left:725px;top:610px;width:210px;height:25px">Straight 10%<i></i></div>
<div class="cb" style="left:725px;top:636px;width:210px;height:25px">Loss ratio sliding scale<i></i></div>
<div class="ck" style="left:725px;top:696px"><svg class="abs" style="left:1px;top:1px" width="10" height="10" viewBox="0 0 10 10"><path d="M1.500 4.500l2 3.500 4.500-7" fill="none" stroke="#2a3a8c" stroke-width="1.800"/></svg></div><div class="lb" style="left:742px;top:696px">Limit to TSI</div>
<div class="ck" style="left:725px;top:712px"></div><div class="lb" style="left:742px;top:712px">Limit to policyholder investment</div>
<div class="bt" style="left:725px;top:730px;width:210px;height:25px;">Edit...</div>
<div class="bt" style="left:796px;top:781px;width:100px;height:25px;border-color:#3c7fb1;background:linear-gradient(#f0f6fb 0,#e3f0f9 49%,#cfe5f4 50%,#bcd9ee 100%);box-shadow:inset 0 0 0 1px #48d8fb55,inset 0 0 0 2px rgba(255,255,255,.6)">Save</div>
<div class="bt" style="left:896px;top:781px;width:100px;height:25px;">Cancel</div>
<div class="cb" style="left:1167px;top:201px;width:210px;height:24px"><i></i></div>
<div class="bt" style="left:1167px;top:227px;width:210px;height:25px;">Edit...</div>
<div class="bt" style="left:1167px;top:253px;width:210px;height:25px;">Edit...</div>
<div class="ck" style="left:1167px;top:313px"></div><div class="lb" style="left:1184px;top:314px">Zero rated</div>
<div class="cb" style="left:1167px;top:347px;width:210px;height:25px">Insurance risk<i></i></div>
<div class="ck" style="left:1167px;top:378px"></div><div class="lb" style="left:1184px;top:378px">Post only once-off amount</div>
<div class="ck" style="left:1167px;top:394px"></div><div class="lb" style="left:1184px;top:394px">Do not refund pro rata</div>
<div class="tb" style="left:1167px;top:411px;width:175px;height:25px">0</div>
<div class="lb" style="left:1354px;top:417px">%</div>
<div class="bt" style="left:1167px;top:443px;width:210px;height:25px;">Edit...</div>
<div class="bt" style="left:1167px;top:475px;width:210px;height:25px;">Edit...</div>
<div class="bt" style="left:1167px;top:537px;width:210px;height:25px;">Edit...</div>
<div class="bt" style="left:1167px;top:563px;width:210px;height:25px;">Edit...</div>
<div class="bt" style="left:1167px;top:589px;width:210px;height:25px;">Edit...</div>
<div class="tb" style="left:1167px;top:647px;width:210px;height:31px;border:1px solid #8c9aa8;line-height:22px">1900/01/02<svg class="abs" style="right:5px;top:5px" width="20" height="19" viewBox="0 0 20 19"><rect x=".5" y=".5" width="19" height="18" fill="#f6f6f6" stroke="#8a8f96"/><rect x="1" y="1" width="18" height="4" fill="#4f8fd6"/><circle cx="10" cy="3" r="1.100" fill="#fff"/><text x="10" y="16" font-family="Liberation Sans,sans-serif" font-size="10.500" text-anchor="middle" fill="#222">15</text></svg></div>
<div class="tb" style="left:1167px;top:678px;width:210px;height:31px;border:1px solid #8c9aa8;line-height:22px">2999/12/31<svg class="abs" style="right:5px;top:5px" width="20" height="19" viewBox="0 0 20 19"><rect x=".5" y=".5" width="19" height="18" fill="#f6f6f6" stroke="#8a8f96"/><rect x="1" y="1" width="18" height="4" fill="#4f8fd6"/><circle cx="10" cy="3" r="1.100" fill="#fff"/><text x="10" y="16" font-family="Liberation Sans,sans-serif" font-size="10.500" text-anchor="middle" fill="#222">15</text></svg></div>
<svg class="abs" style="left:410px;top:160px" width="90" height="95" viewBox="0 0 90 95"><defs><linearGradient id="pg" x1="0" y1="0" x2="0" y2="1"><stop offset="0" stop-color="#ffffff"/><stop offset=".5" stop-color="#f4f4f4"/><stop offset="1" stop-color="#e0e0e0"/></linearGradient><filter id="ps" x="-20%" y="-20%" width="140%" height="140%"><feGaussianBlur stdDeviation="1.100"/></filter><linearGradient id="fer" x1="0" y1="0" x2="0" y2="1"><stop offset="0" stop-color="#f2f2f2"/><stop offset=".5" stop-color="#b9b9b9"/><stop offset="1" stop-color="#8a8a8a"/></linearGradient></defs><path d="M10 84.500h62.500v2h-62.500z" fill="#000" opacity=".8" filter="url(#ps)"/><path d="M9.600 11.100a1.500 1.500 0 0 1 1.500-1.500h42.500l19 17.700v56.800a1.500 1.500 0 0 1-1.500 1.500h-60a1.500 1.500 0 0 1-1.500-1.500z" fill="url(#pg)" stroke="#c6c6c6" stroke-width=".8"/><path d="M53.600 9.600v15.600a2 2 0 0 0 2 2h17z" fill="#fcfcfc" stroke="#c9c9c9" stroke-width=".7"/><path d="M55 28.500l17.500 0v6l-17.500-6z" fill="#000" opacity=".08"/><g transform="translate(20,76) rotate(-44.200)" opacity=".35" filter="url(#ps)"><path d="M0 0l12-4v8zM12-4h76v8h-76z" fill="#000"/></g><g transform="translate(18,73.700) rotate(-44.200)"><path d="M0 0l12-4.100v8.200z" fill="#f3d3b4"/><path d="M0 0l12 0v4.100z" fill="#d9a981"/><path d="M0 0l3.800-1.300v2.600z" fill="#3c3c3c"/><rect x="12" y="-4.100" width="58" height="2.700" fill="#ffd23e"/><rect x="12" y="-1.400" width="58" height="2.800" fill="#f9b414"/><rect x="12" y="1.400" width="58" height="2.700" fill="#d88a0c"/><rect x="70" y="-4.100" width="9" height="8.200" fill="url(#fer)"/><path d="M72-4v8M74-4v8M76-4v8" stroke="#8f8f8f" stroke-width=".6"/><path d="M79-4.100h4.500a4.100 4.100 0 0 1 0 8.200h-4.500z" fill="#f6967c"/><path d="M79-4.100h4.500a4.100 4.100 0 0 1 3.500 2h-8z" fill="#fbb9a6"/></g></svg>
<div class="abs" style="left:1381px;top:814px;width:5px;height:9px;border:1px solid #9a9a9a;border-bottom:none;border-radius:2.5px 2.5px 0 0"></div>
</div>
</body></html>
